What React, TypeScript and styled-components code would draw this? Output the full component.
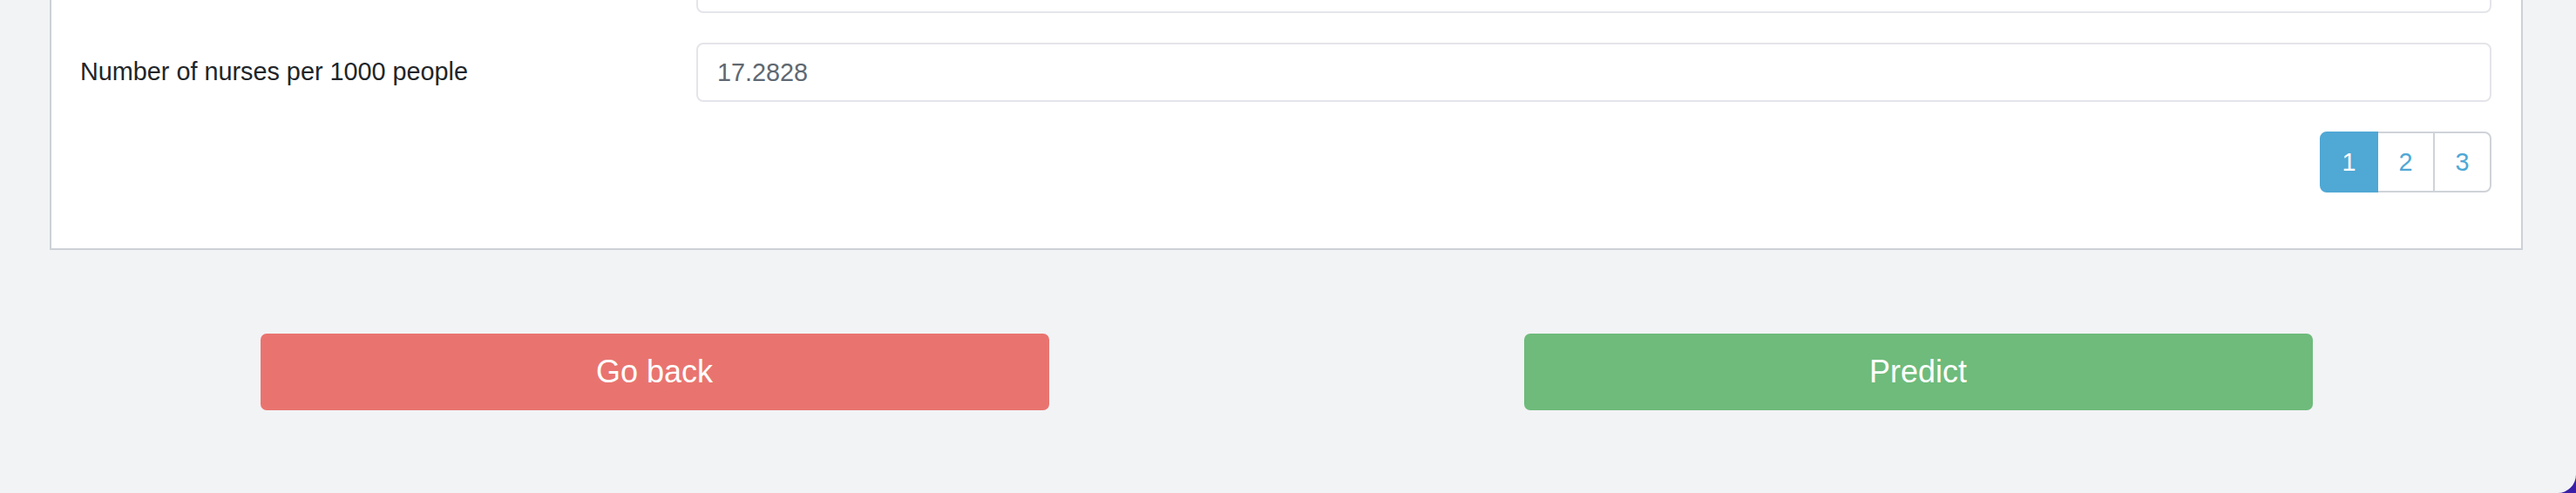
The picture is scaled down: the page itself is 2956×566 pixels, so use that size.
import React from "react";
import styled, { createGlobalStyle } from "styled-components";

const GlobalStyle = createGlobalStyle`
  html, body {
    margin: 0;
    padding: 0;
    background: #f2f3f5;
    font-family: "Liberation Sans", Arial, sans-serif;
  }
  * { box-sizing: border-box; }
`;

const Page = styled.div`
  position: relative;
  height: 566px;
  overflow: hidden;
  background: #f2f3f5;
`;

const Card = styled.div`
  margin: -102px 61px 0 57px;
  padding: 47px 34px 64px 33px;
  background: #ffffff;
  border: 2px solid #cdd1d6;
`;

const FormRow = styled.div`
  display: flex;
  align-items: center;
  margin-bottom: 34px;
`;

const Label = styled.label`
  flex: 0 0 707px;
  color: #212529;
  font-size: 28.8px;
  line-height: 1.5;
`;

const Input = styled.input`
  flex: 1;
  height: 68px;
  padding: 0 22px;
  border: 2px solid #e4e5ea;
  border-radius: 8px;
  background: #fff;
  color: #5f6872;
  font-family: inherit;
  font-size: 28.8px;
  outline: none;
`;

const PaginationRow = styled.nav`
  display: flex;
  justify-content: flex-end;
`;

const PageList = styled.ul`
  display: flex;
  margin: 0;
  padding: 0;
  list-style: none;
`;

const PageItem = styled.li<{ $active?: boolean; $first?: boolean; $last?: boolean }>`
  width: 67px;
  height: 70px;
  display: flex;
  align-items: center;
  justify-content: center;
  margin-left: ${(p) => (p.$first ? "0" : "-2px")};
  border: 2px solid ${(p) => (p.$active ? "#50a8d4" : "#cfd3d8")};
  background: ${(p) => (p.$active ? "#50a8d4" : "#ffffff")};
  color: ${(p) => (p.$active ? "#ffffff" : "#4fa8d5")};
  font-size: 28.8px;
  border-radius: ${(p) => (p.$first ? "8px 0 0 8px" : p.$last ? "0 8px 8px 0" : "0")};
  position: relative;
  z-index: ${(p) => (p.$active ? 1 : 0)};
`;

const ButtonRow = styled.div`
  display: grid;
  grid-template-columns: 1fr 1fr;
  margin: 96px 30px 0 26px;
`;

const ActionButton = styled.button<{ $variant: "danger" | "success" }>`
  justify-self: center;
  width: 905px;
  height: 88px;
  border: none;
  border-radius: 7px;
  background: ${(p) => (p.$variant === "danger" ? "#e9746f" : "#6ebb7b")};
  color: #ffffff;
  font-family: inherit;
  font-size: 36px;
  cursor: pointer;
`;

const Corner = styled.svg`
  position: absolute;
  right: 0;
  bottom: 0;
  width: 21px;
  height: 21px;
  display: block;
`;

export default function App() {
  return (
    <>
      <GlobalStyle />
      <Page>
        <Card>
          <FormRow>
            <Label />
            <Input readOnly defaultValue="" />
          </FormRow>
          <FormRow>
            <Label>Number of nurses per 1000 people</Label>
            <Input readOnly defaultValue="17.2828" />
          </FormRow>
          <PaginationRow>
            <PageList>
              <PageItem $active $first>1</PageItem>
              <PageItem>2</PageItem>
              <PageItem $last>3</PageItem>
            </PageList>
          </PaginationRow>
        </Card>
        <ButtonRow>
          <ActionButton $variant="danger">Go back</ActionButton>
          <ActionButton $variant="success">Predict</ActionButton>
        </ButtonRow>
        <Corner viewBox="0 0 21 21">
          <path d="M21 0 L21 21 L0 21 A21 21 0 0 0 21 0 Z" fill="#3a1fa6" />
        </Corner>
      </Page>
    </>
  );
}
